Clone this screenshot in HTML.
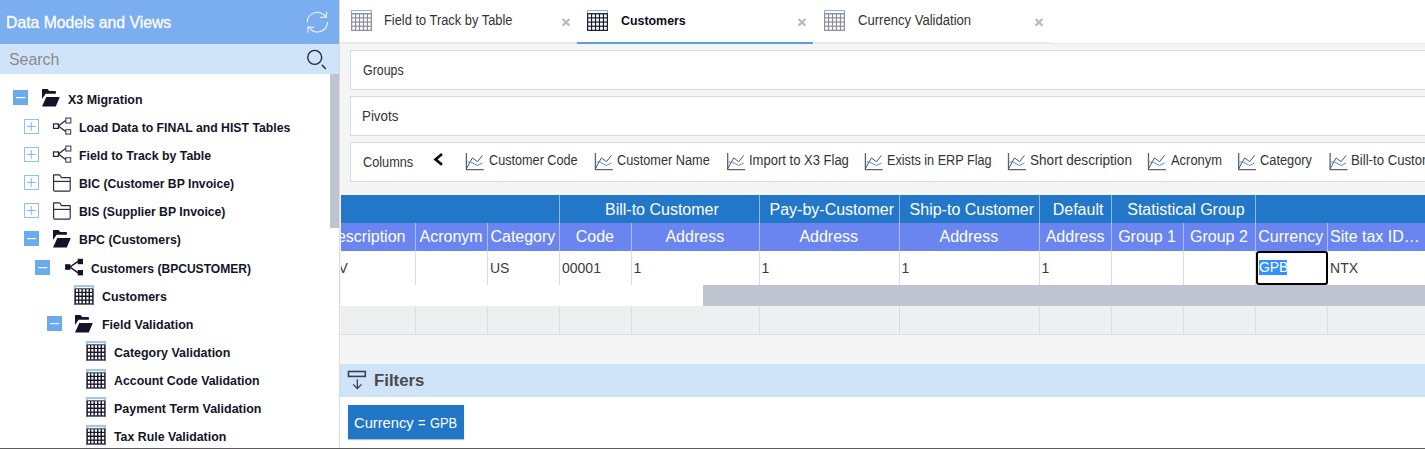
<!DOCTYPE html>
<html><head><meta charset="utf-8">
<style>
*{margin:0;padding:0;box-sizing:border-box}
html,body{width:1425px;height:449px;overflow:hidden;background:#fff;font-family:"Liberation Sans",sans-serif}
.a{position:absolute}
.t{position:absolute;white-space:pre;line-height:1;transform-origin:0 0}
svg{position:absolute;overflow:visible}
</style></head><body>
<div class="a" style="left:0px;top:0px;width:339px;height:44px;background:#7aaef0;"></div>
<div class="t" style="left:5.66px;top:15.00px;font-size:16.8px;color:#fff;font-weight:normal;transform:scaleX(0.9387);-webkit-text-stroke:0.3px #fff;">Data Models and Views</div>
<svg style="left:300px;top:6px" width="36" height="34" viewBox="0 0 36 34" fill="none" stroke="#e4eefc" stroke-width="1.2" stroke-linecap="round">
  <path d="M7.3,16 A10.1,10.1 0 0 1 25.6,10.6"/>
  <path d="M26.6,6.2 L26.3,11.3 L20.6,11.4"/>
  <path d="M27.5,16.4 A10.1,10.1 0 0 1 9.2,21.7"/>
  <path d="M8,26.2 L7.8,21.2 L13.8,21.4"/>
</svg>
<div class="a" style="left:0px;top:44px;width:339px;height:30px;background:#cfe4f8;"></div>
<div class="t" style="left:8.60px;top:51.00px;font-size:16.4px;color:#8a8a8a;font-weight:normal;transform:scaleX(0.9669);">Search</div>
<svg style="left:298px;top:44px" width="36" height="30" viewBox="0 0 36 30" fill="none" stroke="#23263a" stroke-width="1.4" stroke-linecap="round">
  <circle cx="16.7" cy="13.4" r="7"/>
  <path d="M24.2,21.2 L27.4,24.4"/>
</svg>
<div class="a" style="left:330px;top:74px;width:9px;height:154px;background:#c0c3d2;"></div>
<div class="a" style="left:339px;top:0px;width:1px;height:448px;background:#dcdcdc;"></div>
<svg style="left:13px;top:90px" width="15" height="15" viewBox="0 0 15 15"><rect x="0" y="0" width="15" height="15" fill="#6aaaee"/><rect x="3" y="7" width="9.3" height="1.2" fill="#fff"/></svg>
<svg style="left:38.00px;top:86.00px" width="26" height="24" viewBox="0 0 26 24"><path d="M4,3.5 Q4,2.9 4.6,2.9 L9.6,2.9 L11.2,5.1 L17.3,5.1 Q17.9,5.1 17.9,5.7 L17.9,7.3 Q17.9,7.8 17.3,7.8 L7.6,7.8 L4,13 Z" fill="#141428"/><path d="M8.3,11 L21.3,11 Q21.8,11 21.6,11.5 L17.9,20.3 Q17.8,20.6 17.4,20.6 L4.4,20.6 Q4,20.6 4.1,20.2 Z" fill="#141428"/></svg>
<div class="t" style="left:68.20px;top:94.00px;font-size:12.5px;color:#141428;font-weight:bold;transform:scaleX(0.9937);">X3 Migration</div>
<svg style="left:24.2px;top:119px" width="15" height="15" viewBox="0 0 15 15"><rect x="0.5" y="0.5" width="14" height="14" fill="#fff" stroke="#8ec0f5" stroke-width="1"/><path d="M2.8,7.4 H11.7 M7.2,3 V11.8" stroke="#7db6f2" stroke-width="1"/></svg>
<svg style="left:50.00px;top:114.00px" width="26" height="24" viewBox="0 0 26 24" fill="none" stroke-width="1.4"><rect x="3.5" y="9.9" width="4.9" height="4.5" stroke="#23233a" stroke-width="1.2"/><rect x="15.8" y="4.1" width="5" height="4.9" stroke="#5e5e70" stroke-width="1.3"/><rect x="15.8" y="15.6" width="4.8" height="4.5" stroke="#5e5e70" stroke-width="1.3"/><path d="M8.3,12 L15.6,6.6 M8.3,12 L15.6,17.4" stroke="#23233a" stroke-width="1.3"/></svg>
<div class="t" style="left:79.40px;top:122.00px;font-size:12.5px;color:#141428;font-weight:bold;transform:scaleX(0.9805);">Load Data to FINAL and HIST Tables</div>
<svg style="left:24.2px;top:147px" width="15" height="15" viewBox="0 0 15 15"><rect x="0.5" y="0.5" width="14" height="14" fill="#fff" stroke="#8ec0f5" stroke-width="1"/><path d="M2.8,7.4 H11.7 M7.2,3 V11.8" stroke="#7db6f2" stroke-width="1"/></svg>
<svg style="left:50.00px;top:141.90px" width="26" height="24" viewBox="0 0 26 24" fill="none" stroke-width="1.4"><rect x="3.5" y="9.9" width="4.9" height="4.5" stroke="#23233a" stroke-width="1.2"/><rect x="15.8" y="4.1" width="5" height="4.9" stroke="#5e5e70" stroke-width="1.3"/><rect x="15.8" y="15.6" width="4.8" height="4.5" stroke="#5e5e70" stroke-width="1.3"/><path d="M8.3,12 L15.6,6.6 M8.3,12 L15.6,17.4" stroke="#23233a" stroke-width="1.3"/></svg>
<div class="t" style="left:79.40px;top:150.00px;font-size:12.5px;color:#141428;font-weight:bold;transform:scaleX(0.9875);">Field to Track by Table</div>
<svg style="left:24.2px;top:175.1px" width="15" height="15" viewBox="0 0 15 15"><rect x="0.5" y="0.5" width="14" height="14" fill="#fff" stroke="#8ec0f5" stroke-width="1"/><path d="M2.8,7.4 H11.7 M7.2,3 V11.8" stroke="#7db6f2" stroke-width="1"/></svg>
<svg style="left:20.00px;top:170.00px" width="56" height="28" viewBox="0 0 56 28" fill="none" stroke="#2a2a3a" stroke-width="1.15" stroke-linejoin="round"><path d="M33.6,4.8 L39.6,4.8 L41.5,7.6 L50.2,7.6 L50.2,20 Q50.2,21.1 49.1,21.1 L34.7,21.1 Q33.6,21.1 33.6,20 Z"/><path d="M33.6,11.4 L50.2,11.4"/></svg>
<div class="t" style="left:79.30px;top:178.00px;font-size:12.5px;color:#141428;font-weight:bold;transform:scaleX(0.9768);">BIC (Customer BP Invoice)</div>
<svg style="left:24.2px;top:203px" width="15" height="15" viewBox="0 0 15 15"><rect x="0.5" y="0.5" width="14" height="14" fill="#fff" stroke="#8ec0f5" stroke-width="1"/><path d="M2.8,7.4 H11.7 M7.2,3 V11.8" stroke="#7db6f2" stroke-width="1"/></svg>
<svg style="left:20.00px;top:197.90px" width="56" height="28" viewBox="0 0 56 28" fill="none" stroke="#2a2a3a" stroke-width="1.15" stroke-linejoin="round"><path d="M33.6,4.8 L39.6,4.8 L41.5,7.6 L50.2,7.6 L50.2,20 Q50.2,21.1 49.1,21.1 L34.7,21.1 Q33.6,21.1 33.6,20 Z"/><path d="M33.6,11.4 L50.2,11.4"/></svg>
<div class="t" style="left:79.30px;top:206.00px;font-size:12.5px;color:#141428;font-weight:bold;transform:scaleX(0.9776);">BIS (Supplier BP Invoice)</div>
<svg style="left:24px;top:231px" width="15" height="15" viewBox="0 0 15 15"><rect x="0" y="0" width="15" height="15" fill="#6aaaee"/><rect x="3" y="7" width="9.3" height="1.2" fill="#fff"/></svg>
<svg style="left:48.70px;top:226.80px" width="26" height="24" viewBox="0 0 26 24"><path d="M4,3.5 Q4,2.9 4.6,2.9 L9.6,2.9 L11.2,5.1 L17.3,5.1 Q17.9,5.1 17.9,5.7 L17.9,7.3 Q17.9,7.8 17.3,7.8 L7.6,7.8 L4,13 Z" fill="#141428"/><path d="M8.3,11 L21.3,11 Q21.8,11 21.6,11.5 L17.9,20.3 Q17.8,20.6 17.4,20.6 L4.4,20.6 Q4,20.6 4.1,20.2 Z" fill="#141428"/></svg>
<div class="t" style="left:79.30px;top:234.00px;font-size:12.5px;color:#141428;font-weight:bold;transform:scaleX(0.9843);">BPC (Customers)</div>
<svg style="left:35px;top:259.9px" width="15" height="15" viewBox="0 0 15 15"><rect x="0" y="0" width="15" height="15" fill="#6aaaee"/><rect x="3" y="7" width="9.3" height="1.2" fill="#fff"/></svg>
<svg style="left:59.60px;top:253.90px" width="26" height="24" viewBox="0 0 26 24"><rect x="5.1" y="10.2" width="5.3" height="5.6" fill="#141428"/><rect x="17.7" y="4.8" width="5.3" height="5.4" fill="#141428"/><rect x="17.7" y="16" width="5.3" height="5.4" fill="#141428"/><path d="M10,13 L18,7.3 M10,13 L18,18.9" stroke="#141428" stroke-width="1.5" fill="none"/></svg>
<div class="t" style="left:90.60px;top:263.00px;font-size:12.5px;color:#141428;font-weight:bold;transform:scaleX(0.9656);">Customers (BPCUSTOMER)</div>
<svg style="left:74px;top:285px" width="20" height="20" viewBox="0 0 20 20"><rect x="0" y="0" width="20" height="3.5" fill="#9cc6f4"/><rect x="1.8" y="2.0" width="16.4" height="0.9" fill="#fff"/><rect x="0" y="3.5" width="20" height="16.5" fill="#6c6c7a"/><rect x="1" y="3.6" width="18" height="15.4" fill="#1a1a2e"/><rect x="1.9" y="4.3" width="2.15" height="2.45" fill="#fff"/><rect x="5.3" y="4.3" width="2.15" height="2.45" fill="#fff"/><rect x="8.85" y="4.3" width="2.15" height="2.45" fill="#fff"/><rect x="12.4" y="4.3" width="2.15" height="2.45" fill="#fff"/><rect x="16.0" y="4.3" width="2.15" height="2.45" fill="#fff"/><rect x="1.9" y="8.05" width="2.15" height="2.45" fill="#fff"/><rect x="5.3" y="8.05" width="2.15" height="2.45" fill="#fff"/><rect x="8.85" y="8.05" width="2.15" height="2.45" fill="#fff"/><rect x="12.4" y="8.05" width="2.15" height="2.45" fill="#fff"/><rect x="16.0" y="8.05" width="2.15" height="2.45" fill="#fff"/><rect x="1.9" y="12.05" width="2.15" height="2.45" fill="#fff"/><rect x="5.3" y="12.05" width="2.15" height="2.45" fill="#fff"/><rect x="8.85" y="12.05" width="2.15" height="2.45" fill="#fff"/><rect x="12.4" y="12.05" width="2.15" height="2.45" fill="#fff"/><rect x="16.0" y="12.05" width="2.15" height="2.45" fill="#fff"/><rect x="1.9" y="15.85" width="2.15" height="2.45" fill="#fff"/><rect x="5.3" y="15.85" width="2.15" height="2.45" fill="#fff"/><rect x="8.85" y="15.85" width="2.15" height="2.45" fill="#fff"/><rect x="12.4" y="15.85" width="2.15" height="2.45" fill="#fff"/><rect x="16.0" y="15.85" width="2.15" height="2.45" fill="#fff"/></svg>
<div class="t" style="left:101.80px;top:291.00px;font-size:12.5px;color:#141428;font-weight:bold;transform:scaleX(0.9932);">Customers</div>
<svg style="left:47px;top:315.8px" width="15" height="15" viewBox="0 0 15 15"><rect x="0" y="0" width="15" height="15" fill="#6aaaee"/><rect x="3" y="7" width="9.3" height="1.2" fill="#fff"/></svg>
<svg style="left:71.20px;top:311.70px" width="26" height="24" viewBox="0 0 26 24"><path d="M4,3.5 Q4,2.9 4.6,2.9 L9.6,2.9 L11.2,5.1 L17.3,5.1 Q17.9,5.1 17.9,5.7 L17.9,7.3 Q17.9,7.8 17.3,7.8 L7.6,7.8 L4,13 Z" fill="#141428"/><path d="M8.3,11 L21.3,11 Q21.8,11 21.6,11.5 L17.9,20.3 Q17.8,20.6 17.4,20.6 L4.4,20.6 Q4,20.6 4.1,20.2 Z" fill="#141428"/></svg>
<div class="t" style="left:101.80px;top:319.00px;font-size:12.5px;color:#141428;font-weight:bold;transform:scaleX(0.9973);">Field Validation</div>
<svg style="left:86px;top:341px" width="20" height="20" viewBox="0 0 20 20"><rect x="0" y="0" width="20" height="3.5" fill="#9cc6f4"/><rect x="1.8" y="2.0" width="16.4" height="0.9" fill="#fff"/><rect x="0" y="3.5" width="20" height="16.5" fill="#6c6c7a"/><rect x="1" y="3.6" width="18" height="15.4" fill="#1a1a2e"/><rect x="1.9" y="4.3" width="2.15" height="2.45" fill="#fff"/><rect x="5.3" y="4.3" width="2.15" height="2.45" fill="#fff"/><rect x="8.85" y="4.3" width="2.15" height="2.45" fill="#fff"/><rect x="12.4" y="4.3" width="2.15" height="2.45" fill="#fff"/><rect x="16.0" y="4.3" width="2.15" height="2.45" fill="#fff"/><rect x="1.9" y="8.05" width="2.15" height="2.45" fill="#fff"/><rect x="5.3" y="8.05" width="2.15" height="2.45" fill="#fff"/><rect x="8.85" y="8.05" width="2.15" height="2.45" fill="#fff"/><rect x="12.4" y="8.05" width="2.15" height="2.45" fill="#fff"/><rect x="16.0" y="8.05" width="2.15" height="2.45" fill="#fff"/><rect x="1.9" y="12.05" width="2.15" height="2.45" fill="#fff"/><rect x="5.3" y="12.05" width="2.15" height="2.45" fill="#fff"/><rect x="8.85" y="12.05" width="2.15" height="2.45" fill="#fff"/><rect x="12.4" y="12.05" width="2.15" height="2.45" fill="#fff"/><rect x="16.0" y="12.05" width="2.15" height="2.45" fill="#fff"/><rect x="1.9" y="15.85" width="2.15" height="2.45" fill="#fff"/><rect x="5.3" y="15.85" width="2.15" height="2.45" fill="#fff"/><rect x="8.85" y="15.85" width="2.15" height="2.45" fill="#fff"/><rect x="12.4" y="15.85" width="2.15" height="2.45" fill="#fff"/><rect x="16.0" y="15.85" width="2.15" height="2.45" fill="#fff"/></svg>
<div class="t" style="left:113.50px;top:347.00px;font-size:12.5px;color:#141428;font-weight:bold;transform:scaleX(0.9969);">Category Validation</div>
<svg style="left:86px;top:369px" width="20" height="20" viewBox="0 0 20 20"><rect x="0" y="0" width="20" height="3.5" fill="#9cc6f4"/><rect x="1.8" y="2.0" width="16.4" height="0.9" fill="#fff"/><rect x="0" y="3.5" width="20" height="16.5" fill="#6c6c7a"/><rect x="1" y="3.6" width="18" height="15.4" fill="#1a1a2e"/><rect x="1.9" y="4.3" width="2.15" height="2.45" fill="#fff"/><rect x="5.3" y="4.3" width="2.15" height="2.45" fill="#fff"/><rect x="8.85" y="4.3" width="2.15" height="2.45" fill="#fff"/><rect x="12.4" y="4.3" width="2.15" height="2.45" fill="#fff"/><rect x="16.0" y="4.3" width="2.15" height="2.45" fill="#fff"/><rect x="1.9" y="8.05" width="2.15" height="2.45" fill="#fff"/><rect x="5.3" y="8.05" width="2.15" height="2.45" fill="#fff"/><rect x="8.85" y="8.05" width="2.15" height="2.45" fill="#fff"/><rect x="12.4" y="8.05" width="2.15" height="2.45" fill="#fff"/><rect x="16.0" y="8.05" width="2.15" height="2.45" fill="#fff"/><rect x="1.9" y="12.05" width="2.15" height="2.45" fill="#fff"/><rect x="5.3" y="12.05" width="2.15" height="2.45" fill="#fff"/><rect x="8.85" y="12.05" width="2.15" height="2.45" fill="#fff"/><rect x="12.4" y="12.05" width="2.15" height="2.45" fill="#fff"/><rect x="16.0" y="12.05" width="2.15" height="2.45" fill="#fff"/><rect x="1.9" y="15.85" width="2.15" height="2.45" fill="#fff"/><rect x="5.3" y="15.85" width="2.15" height="2.45" fill="#fff"/><rect x="8.85" y="15.85" width="2.15" height="2.45" fill="#fff"/><rect x="12.4" y="15.85" width="2.15" height="2.45" fill="#fff"/><rect x="16.0" y="15.85" width="2.15" height="2.45" fill="#fff"/></svg>
<div class="t" style="left:113.50px;top:375.00px;font-size:12.5px;color:#141428;font-weight:bold;transform:scaleX(0.9884);">Account Code Validation</div>
<svg style="left:86px;top:397px" width="20" height="20" viewBox="0 0 20 20"><rect x="0" y="0" width="20" height="3.5" fill="#9cc6f4"/><rect x="1.8" y="2.0" width="16.4" height="0.9" fill="#fff"/><rect x="0" y="3.5" width="20" height="16.5" fill="#6c6c7a"/><rect x="1" y="3.6" width="18" height="15.4" fill="#1a1a2e"/><rect x="1.9" y="4.3" width="2.15" height="2.45" fill="#fff"/><rect x="5.3" y="4.3" width="2.15" height="2.45" fill="#fff"/><rect x="8.85" y="4.3" width="2.15" height="2.45" fill="#fff"/><rect x="12.4" y="4.3" width="2.15" height="2.45" fill="#fff"/><rect x="16.0" y="4.3" width="2.15" height="2.45" fill="#fff"/><rect x="1.9" y="8.05" width="2.15" height="2.45" fill="#fff"/><rect x="5.3" y="8.05" width="2.15" height="2.45" fill="#fff"/><rect x="8.85" y="8.05" width="2.15" height="2.45" fill="#fff"/><rect x="12.4" y="8.05" width="2.15" height="2.45" fill="#fff"/><rect x="16.0" y="8.05" width="2.15" height="2.45" fill="#fff"/><rect x="1.9" y="12.05" width="2.15" height="2.45" fill="#fff"/><rect x="5.3" y="12.05" width="2.15" height="2.45" fill="#fff"/><rect x="8.85" y="12.05" width="2.15" height="2.45" fill="#fff"/><rect x="12.4" y="12.05" width="2.15" height="2.45" fill="#fff"/><rect x="16.0" y="12.05" width="2.15" height="2.45" fill="#fff"/><rect x="1.9" y="15.85" width="2.15" height="2.45" fill="#fff"/><rect x="5.3" y="15.85" width="2.15" height="2.45" fill="#fff"/><rect x="8.85" y="15.85" width="2.15" height="2.45" fill="#fff"/><rect x="12.4" y="15.85" width="2.15" height="2.45" fill="#fff"/><rect x="16.0" y="15.85" width="2.15" height="2.45" fill="#fff"/></svg>
<div class="t" style="left:113.50px;top:403.00px;font-size:12.5px;color:#141428;font-weight:bold;transform:scaleX(0.9980);">Payment Term Validation</div>
<svg style="left:86px;top:425px" width="20" height="20" viewBox="0 0 20 20"><rect x="0" y="0" width="20" height="3.5" fill="#9cc6f4"/><rect x="1.8" y="2.0" width="16.4" height="0.9" fill="#fff"/><rect x="0" y="3.5" width="20" height="16.5" fill="#6c6c7a"/><rect x="1" y="3.6" width="18" height="15.4" fill="#1a1a2e"/><rect x="1.9" y="4.3" width="2.15" height="2.45" fill="#fff"/><rect x="5.3" y="4.3" width="2.15" height="2.45" fill="#fff"/><rect x="8.85" y="4.3" width="2.15" height="2.45" fill="#fff"/><rect x="12.4" y="4.3" width="2.15" height="2.45" fill="#fff"/><rect x="16.0" y="4.3" width="2.15" height="2.45" fill="#fff"/><rect x="1.9" y="8.05" width="2.15" height="2.45" fill="#fff"/><rect x="5.3" y="8.05" width="2.15" height="2.45" fill="#fff"/><rect x="8.85" y="8.05" width="2.15" height="2.45" fill="#fff"/><rect x="12.4" y="8.05" width="2.15" height="2.45" fill="#fff"/><rect x="16.0" y="8.05" width="2.15" height="2.45" fill="#fff"/><rect x="1.9" y="12.05" width="2.15" height="2.45" fill="#fff"/><rect x="5.3" y="12.05" width="2.15" height="2.45" fill="#fff"/><rect x="8.85" y="12.05" width="2.15" height="2.45" fill="#fff"/><rect x="12.4" y="12.05" width="2.15" height="2.45" fill="#fff"/><rect x="16.0" y="12.05" width="2.15" height="2.45" fill="#fff"/><rect x="1.9" y="15.85" width="2.15" height="2.45" fill="#fff"/><rect x="5.3" y="15.85" width="2.15" height="2.45" fill="#fff"/><rect x="8.85" y="15.85" width="2.15" height="2.45" fill="#fff"/><rect x="12.4" y="15.85" width="2.15" height="2.45" fill="#fff"/><rect x="16.0" y="15.85" width="2.15" height="2.45" fill="#fff"/></svg>
<div class="t" style="left:113.50px;top:431.00px;font-size:12.5px;color:#141428;font-weight:bold;transform:scaleX(0.9872);">Tax Rule Validation</div>
<div class="a" style="left:340px;top:0px;width:1085px;height:43px;background:#fff;"></div>
<div class="a" style="left:340px;top:43px;width:1085px;height:1px;background:#e6e6e6;"></div>
<div class="a" style="left:340px;top:44px;width:1085px;height:320px;background:#f5f5f5;"></div>
<div class="a" style="left:340px;top:42px;width:237px;height:2px;background:#e8e8e8;"></div>
<div class="a" style="left:577px;top:42px;width:236px;height:2px;background:#5b9be8;"></div>
<div class="a" style="left:813px;top:42px;width:237px;height:2px;background:#e8e8e8;"></div>
<svg style="left:351px;top:10px" width="21" height="21" viewBox="0 0 21 21"><rect x="0.5" y="0.5" width="20" height="3.2" fill="#fff" stroke="#7fb5f0" stroke-width="1"/><g fill="none" stroke="#8c8c9a" stroke-width="1.2"><rect x="0.65" y="3.75" width="19.7" height="16.6"/><path d="M4.56,3.8 V20.4"/><path d="M8.52,3.8 V20.4"/><path d="M12.48,3.8 V20.4"/><path d="M16.44,3.8 V20.4"/><path d="M0.6,7.88 H20.4"/><path d="M0.6,12.05 H20.4"/><path d="M0.6,16.22 H20.4"/></g></svg>
<div class="t" style="left:383.88px;top:13.00px;font-size:14px;color:#333;font-weight:normal;transform:scaleX(0.9188);">Field to Track by Table</div>
<svg style="left:560.7px;top:17px" width="10" height="10" viewBox="0 0 10 10"><path d="M1.6,2 L8.4,8.7 M8.4,2 L1.6,8.7" stroke="#bcbcbc" stroke-width="2.4"/></svg>
<svg style="left:587px;top:10px" width="21" height="21" viewBox="0 0 21 21"><rect x="0.5" y="0.5" width="20" height="3.2" fill="#fff" stroke="#7fb5f0" stroke-width="1"/><g fill="none" stroke="#1a1a2e" stroke-width="1.2"><rect x="0.65" y="3.75" width="19.7" height="16.6"/><path d="M4.56,3.8 V20.4"/><path d="M8.52,3.8 V20.4"/><path d="M12.48,3.8 V20.4"/><path d="M16.44,3.8 V20.4"/><path d="M0.6,7.88 H20.4"/><path d="M0.6,12.05 H20.4"/><path d="M0.6,16.22 H20.4"/></g></svg>
<div class="t" style="left:620.70px;top:15.00px;font-size:12.5px;color:#0d0d1a;font-weight:bold;transform:scaleX(0.9917);">Customers</div>
<svg style="left:797px;top:17px" width="10" height="10" viewBox="0 0 10 10"><path d="M1.6,2 L8.4,8.7 M8.4,2 L1.6,8.7" stroke="#bcbcbc" stroke-width="2.4"/></svg>
<svg style="left:824px;top:10px" width="21" height="21" viewBox="0 0 21 21"><rect x="0.5" y="0.5" width="20" height="3.2" fill="#fff" stroke="#7fb5f0" stroke-width="1"/><g fill="none" stroke="#8c8c9a" stroke-width="1.2"><rect x="0.65" y="3.75" width="19.7" height="16.6"/><path d="M4.56,3.8 V20.4"/><path d="M8.52,3.8 V20.4"/><path d="M12.48,3.8 V20.4"/><path d="M16.44,3.8 V20.4"/><path d="M0.6,7.88 H20.4"/><path d="M0.6,12.05 H20.4"/><path d="M0.6,16.22 H20.4"/></g></svg>
<div class="t" style="left:857.80px;top:13.00px;font-size:14px;color:#333;font-weight:normal;transform:scaleX(0.9340);">Currency Validation</div>
<svg style="left:1034.3px;top:17px" width="10" height="10" viewBox="0 0 10 10"><path d="M1.6,2 L8.4,8.7 M8.4,2 L1.6,8.7" stroke="#bcbcbc" stroke-width="2.4"/></svg>
<div class="a" style="left:350px;top:50px;width:1090px;height:40px;background:#fff;border:1px solid #d5dce4"></div>
<div class="a" style="left:350px;top:96px;width:1090px;height:40px;background:#fff;border:1px solid #d5dce4"></div>
<div class="a" style="left:350px;top:142px;width:1090px;height:40px;background:#fff;border:1px solid #d5dce4"></div>
<div class="t" style="left:363.10px;top:63.00px;font-size:14px;color:#333;font-weight:normal;transform:scaleX(0.8865);">Groups</div>
<div class="t" style="left:361.75px;top:109.00px;font-size:14px;color:#333;font-weight:normal;transform:scaleX(0.9536);">Pivots</div>
<div class="t" style="left:362.90px;top:155.00px;font-size:14px;color:#333;font-weight:normal;transform:scaleX(0.9087);">Columns</div>
<svg style="left:428px;top:146px" width="20" height="30" viewBox="0 0 20 30" fill="none" stroke="#0d0d1a" stroke-width="2.7" stroke-linejoin="miter">
  <path d="M14,8 L7.5,13.4 L14,18.8"/>
</svg>
<svg style="left:0;top:0" width="1425" height="449" viewBox="0 0 1425 449" fill="none"><path d="M466.40000000000003,153 V169.7 H483.8" stroke="#606070" stroke-width="1.3"/><path d="M466.40000000000003,168.7 L472.40000000000003,157.9 L477.40000000000003,161.7 L482.40000000000003,155.4" stroke="#505060" stroke-width="1"/><path d="M467.40000000000003,162 L470.8,162 L477.40000000000003,165.5 L482.40000000000003,163" stroke="#4a90e2" stroke-width="1"/></svg>
<div class="t" style="left:488.50px;top:153.00px;font-size:14px;color:#333;font-weight:normal;transform:scaleX(0.9038);">Customer Code</div>
<svg style="left:0;top:0" width="1425" height="449" viewBox="0 0 1425 449" fill="none"><path d="M595.4,153 V169.7 H612.8" stroke="#606070" stroke-width="1.3"/><path d="M595.4,168.7 L601.4,157.9 L606.4,161.7 L611.4,155.4" stroke="#505060" stroke-width="1"/><path d="M596.4,162 L599.8,162 L606.4,165.5 L611.4,163" stroke="#4a90e2" stroke-width="1"/></svg>
<div class="t" style="left:616.90px;top:153.00px;font-size:14px;color:#333;font-weight:normal;transform:scaleX(0.9106);">Customer Name</div>
<svg style="left:0;top:0" width="1425" height="449" viewBox="0 0 1425 449" fill="none"><path d="M727.7,153 V169.7 H745.1" stroke="#606070" stroke-width="1.3"/><path d="M727.7,168.7 L733.7,157.9 L738.7,161.7 L743.7,155.4" stroke="#505060" stroke-width="1"/><path d="M728.7,162 L732.1,162 L738.7,165.5 L743.7,163" stroke="#4a90e2" stroke-width="1"/></svg>
<div class="t" style="left:748.67px;top:153.00px;font-size:14px;color:#333;font-weight:normal;transform:scaleX(0.9300);">Import to X3 Flag</div>
<svg style="left:0;top:0" width="1425" height="449" viewBox="0 0 1425 449" fill="none"><path d="M865.4,153 V169.7 H882.8" stroke="#606070" stroke-width="1.3"/><path d="M865.4,168.7 L871.4,157.9 L876.4,161.7 L881.4,155.4" stroke="#505060" stroke-width="1"/><path d="M866.4,162 L869.8,162 L876.4,165.5 L881.4,163" stroke="#4a90e2" stroke-width="1"/></svg>
<div class="t" style="left:886.60px;top:153.00px;font-size:14px;color:#333;font-weight:normal;transform:scaleX(0.9042);">Exists in ERP Flag</div>
<svg style="left:0;top:0" width="1425" height="449" viewBox="0 0 1425 449" fill="none"><path d="M1008.5,153 V169.7 H1025.9" stroke="#606070" stroke-width="1.3"/><path d="M1008.5,168.7 L1014.5,157.9 L1019.5,161.7 L1024.5,155.4" stroke="#505060" stroke-width="1"/><path d="M1009.5,162 L1012.9,162 L1019.5,165.5 L1024.5,163" stroke="#4a90e2" stroke-width="1"/></svg>
<div class="t" style="left:1030.00px;top:153.00px;font-size:14px;color:#333;font-weight:normal;transform:scaleX(0.9706);">Short description</div>
<svg style="left:0;top:0" width="1425" height="449" viewBox="0 0 1425 449" fill="none"><path d="M1148.5,153 V169.7 H1165.9" stroke="#606070" stroke-width="1.3"/><path d="M1148.5,168.7 L1154.5,157.9 L1159.5,161.7 L1164.5,155.4" stroke="#505060" stroke-width="1"/><path d="M1149.5,162 L1152.9,162 L1159.5,165.5 L1164.5,163" stroke="#4a90e2" stroke-width="1"/></svg>
<div class="t" style="left:1170.60px;top:153.00px;font-size:14px;color:#333;font-weight:normal;transform:scaleX(0.9235);">Acronym</div>
<svg style="left:0;top:0" width="1425" height="449" viewBox="0 0 1425 449" fill="none"><path d="M1238.6999999999998,153 V169.7 H1256.1" stroke="#606070" stroke-width="1.3"/><path d="M1238.6999999999998,168.7 L1244.6999999999998,157.9 L1249.6999999999998,161.7 L1254.6999999999998,155.4" stroke="#505060" stroke-width="1"/><path d="M1239.6999999999998,162 L1243.1,162 L1249.6999999999998,165.5 L1254.6999999999998,163" stroke="#4a90e2" stroke-width="1"/></svg>
<div class="t" style="left:1260.40px;top:153.00px;font-size:14px;color:#333;font-weight:normal;transform:scaleX(0.9154);">Category</div>
<svg style="left:0;top:0" width="1425" height="449" viewBox="0 0 1425 449" fill="none"><path d="M1330.1,153 V169.7 H1347.5" stroke="#606070" stroke-width="1.3"/><path d="M1330.1,168.7 L1336.1,157.9 L1341.1,161.7 L1346.1,155.4" stroke="#505060" stroke-width="1"/><path d="M1331.1,162 L1334.5,162 L1341.1,165.5 L1346.1,163" stroke="#4a90e2" stroke-width="1"/></svg>
<div class="t" style="left:1351.06px;top:153.00px;font-size:14px;color:#333;font-weight:normal;transform:scaleX(0.9424);">Bill-to Customer</div>
<div class="a" style="left:341px;top:195px;width:1084px;height:28px;background:#2277c9;"></div>
<div class="a" style="left:341px;top:223px;width:1084px;height:28px;background:#6a85f0;"></div>
<div class="a" style="left:341px;top:251px;width:1084px;height:34px;background:#fff;"></div>
<div class="a" style="left:341px;top:285px;width:1084px;height:21px;background:#fff;"></div>
<div class="a" style="left:703px;top:285px;width:722px;height:21px;background:#c0c3d0;"></div>
<div class="a" style="left:341px;top:306px;width:1084px;height:28px;background:#eeeff1;"></div>
<div class="a" style="left:341px;top:334px;width:1084px;height:1px;background:#dcdde2;"></div>
<div class="a" style="left:559px;top:195px;width:1px;height:28px;background:#8cb8e8;"></div>
<div class="a" style="left:759px;top:195px;width:1px;height:28px;background:#8cb8e8;"></div>
<div class="a" style="left:899px;top:195px;width:1px;height:28px;background:#8cb8e8;"></div>
<div class="a" style="left:1039px;top:195px;width:1px;height:28px;background:#8cb8e8;"></div>
<div class="a" style="left:1111px;top:195px;width:1px;height:28px;background:#8cb8e8;"></div>
<div class="a" style="left:1255px;top:195px;width:1px;height:28px;background:#8cb8e8;"></div>
<div class="a" style="left:415px;top:223px;width:1px;height:28px;background:#b0bef8;"></div>
<div class="a" style="left:415px;top:251px;width:1px;height:34px;background:#dcdde2;"></div>
<div class="a" style="left:415px;top:306px;width:1px;height:28px;background:#dcdde2;"></div>
<div class="a" style="left:487px;top:223px;width:1px;height:28px;background:#b0bef8;"></div>
<div class="a" style="left:487px;top:251px;width:1px;height:34px;background:#dcdde2;"></div>
<div class="a" style="left:487px;top:306px;width:1px;height:28px;background:#dcdde2;"></div>
<div class="a" style="left:559px;top:223px;width:1px;height:28px;background:#b0bef8;"></div>
<div class="a" style="left:559px;top:251px;width:1px;height:34px;background:#dcdde2;"></div>
<div class="a" style="left:559px;top:306px;width:1px;height:28px;background:#dcdde2;"></div>
<div class="a" style="left:631px;top:223px;width:1px;height:28px;background:#b0bef8;"></div>
<div class="a" style="left:631px;top:251px;width:1px;height:34px;background:#dcdde2;"></div>
<div class="a" style="left:631px;top:306px;width:1px;height:28px;background:#dcdde2;"></div>
<div class="a" style="left:759px;top:223px;width:1px;height:28px;background:#b0bef8;"></div>
<div class="a" style="left:759px;top:251px;width:1px;height:34px;background:#dcdde2;"></div>
<div class="a" style="left:759px;top:306px;width:1px;height:28px;background:#dcdde2;"></div>
<div class="a" style="left:899px;top:223px;width:1px;height:28px;background:#b0bef8;"></div>
<div class="a" style="left:899px;top:251px;width:1px;height:34px;background:#dcdde2;"></div>
<div class="a" style="left:899px;top:306px;width:1px;height:28px;background:#dcdde2;"></div>
<div class="a" style="left:1039px;top:223px;width:1px;height:28px;background:#b0bef8;"></div>
<div class="a" style="left:1039px;top:251px;width:1px;height:34px;background:#dcdde2;"></div>
<div class="a" style="left:1039px;top:306px;width:1px;height:28px;background:#dcdde2;"></div>
<div class="a" style="left:1111px;top:223px;width:1px;height:28px;background:#b0bef8;"></div>
<div class="a" style="left:1111px;top:251px;width:1px;height:34px;background:#dcdde2;"></div>
<div class="a" style="left:1111px;top:306px;width:1px;height:28px;background:#dcdde2;"></div>
<div class="a" style="left:1183px;top:223px;width:1px;height:28px;background:#b0bef8;"></div>
<div class="a" style="left:1183px;top:251px;width:1px;height:34px;background:#dcdde2;"></div>
<div class="a" style="left:1183px;top:306px;width:1px;height:28px;background:#dcdde2;"></div>
<div class="a" style="left:1255px;top:223px;width:1px;height:28px;background:#b0bef8;"></div>
<div class="a" style="left:1255px;top:251px;width:1px;height:34px;background:#dcdde2;"></div>
<div class="a" style="left:1255px;top:306px;width:1px;height:28px;background:#dcdde2;"></div>
<div class="a" style="left:1327px;top:223px;width:1px;height:28px;background:#b0bef8;"></div>
<div class="a" style="left:1327px;top:251px;width:1px;height:34px;background:#dcdde2;"></div>
<div class="a" style="left:1327px;top:306px;width:1px;height:28px;background:#dcdde2;"></div>
<div class="a" style="left:341px;top:195px;width:1084px;height:140px;overflow:hidden">
<div class="t" style="left:220.90px;top:7.00px;width:200px;text-align:center;font-size:16px;color:#fff">Bill-to Customer</div>
<div class="t" style="left:390.75px;top:7.00px;width:200px;text-align:center;font-size:16px;color:#fff">Pay-by-Customer</div>
<div class="t" style="left:530.85px;top:7.00px;width:200px;text-align:center;font-size:16px;color:#fff">Ship-to Customer</div>
<div class="t" style="left:637.05px;top:7.00px;width:200px;text-align:center;font-size:16px;color:#fff">Default</div>
<div class="t" style="left:744.95px;top:7.00px;width:200px;text-align:center;font-size:16px;color:#fff">Statistical Group</div>
<div class="t" style="left:-75.60px;top:34.00px;width:200px;text-align:center;font-size:16px;color:#fff">Description</div>
<div class="t" style="left:10.05px;top:34.00px;width:200px;text-align:center;font-size:16px;color:#fff">Acronym</div>
<div class="t" style="left:81.90px;top:34.00px;width:200px;text-align:center;font-size:16px;color:#fff">Category</div>
<div class="t" style="left:153.90px;top:34.00px;width:200px;text-align:center;font-size:16px;color:#fff">Code</div>
<div class="t" style="left:253.80px;top:34.00px;width:200px;text-align:center;font-size:16px;color:#fff">Address</div>
<div class="t" style="left:387.75px;top:34.00px;width:200px;text-align:center;font-size:16px;color:#fff">Address</div>
<div class="t" style="left:527.85px;top:34.00px;width:200px;text-align:center;font-size:16px;color:#fff">Address</div>
<div class="t" style="left:634.05px;top:34.00px;width:200px;text-align:center;font-size:16px;color:#fff">Address</div>
<div class="t" style="left:706.05px;top:34.00px;width:200px;text-align:center;font-size:16px;color:#fff">Group 1</div>
<div class="t" style="left:777.90px;top:34.00px;width:200px;text-align:center;font-size:16px;color:#fff">Group 2</div>
<div class="t" style="left:849.70px;top:34.00px;width:200px;text-align:center;font-size:16px;color:#fff">Currency</div>
<div class="t" style="left:989px;top:34.00px;font-size:16px;color:#fff">Site tax ID…</div>
<div class="t" style="left:-2.60px;top:66.00px;font-size:14px;color:#3c3c3c">V</div>
<div class="t" style="left:149.00px;top:66.00px;font-size:14px;color:#3c3c3c">US</div>
<div class="t" style="left:221.00px;top:66.00px;font-size:14px;color:#3c3c3c">00001</div>
<div class="t" style="left:292.60px;top:66.00px;font-size:14px;color:#3c3c3c">1</div>
<div class="t" style="left:420.60px;top:66.00px;font-size:14px;color:#3c3c3c">1</div>
<div class="t" style="left:560.60px;top:66.00px;font-size:14px;color:#3c3c3c">1</div>
<div class="t" style="left:700.60px;top:66.00px;font-size:14px;color:#3c3c3c">1</div>
<div class="t" style="left:989.10px;top:66.00px;font-size:14px;color:#3c3c3c">NTX</div>
<div class="a" style="left:915px;top:56px;width:72px;height:34px;border:2px solid #000;border-radius:3px;background:#fff"></div>
<div class="a" style="left:918px;top:65px;width:28px;height:15px;background:#3390ff"></div>
<div class="t" style="left:917.90px;top:65.00px;font-size:14px;color:#fff">GPB</div>
</div>
<div class="a" style="left:340px;top:364px;width:1085px;height:33px;background:#cfe4f8;"></div>
<svg style="left:342px;top:366px" width="30" height="28" viewBox="0 0 30 28" fill="none" stroke="#3a3f50" stroke-width="1.6">
  <rect x="6.5" y="5.5" width="16.8" height="4.9"/>
  <path d="M15.35,13.3 L15.35,22.2" stroke-width="1.3"/>
  <path d="M11.2,18.4 L15.35,22.5 L19.5,18.4" stroke-width="1.3"/>
</svg>
<div class="t" style="left:373.77px;top:372.00px;font-size:16.3px;color:#4a4a4a;font-weight:bold;transform:scaleX(1.0313);">Filters</div>
<div class="a" style="left:348px;top:405px;width:116px;height:34px;background:#2176c8;box-shadow:0 1px 1px rgba(0,0,0,.25)"></div>
<div class="t" style="left:353.90px;top:415.00px;font-size:15px;color:#fff;font-weight:normal;transform:scaleX(0.9813);">Currency</div>
<div class="t" style="left:418.10px;top:415.00px;font-size:15px;color:#fff;font-weight:normal;transform:scaleX(0.8444);">=</div>
<div class="t" style="left:429.70px;top:415.00px;font-size:15px;color:#fff;font-weight:normal;transform:scaleX(0.8588);">GPB</div>
<div class="a" style="left:0px;top:448px;width:1425px;height:1px;background:#5c5c5c;"></div>
</body></html>
